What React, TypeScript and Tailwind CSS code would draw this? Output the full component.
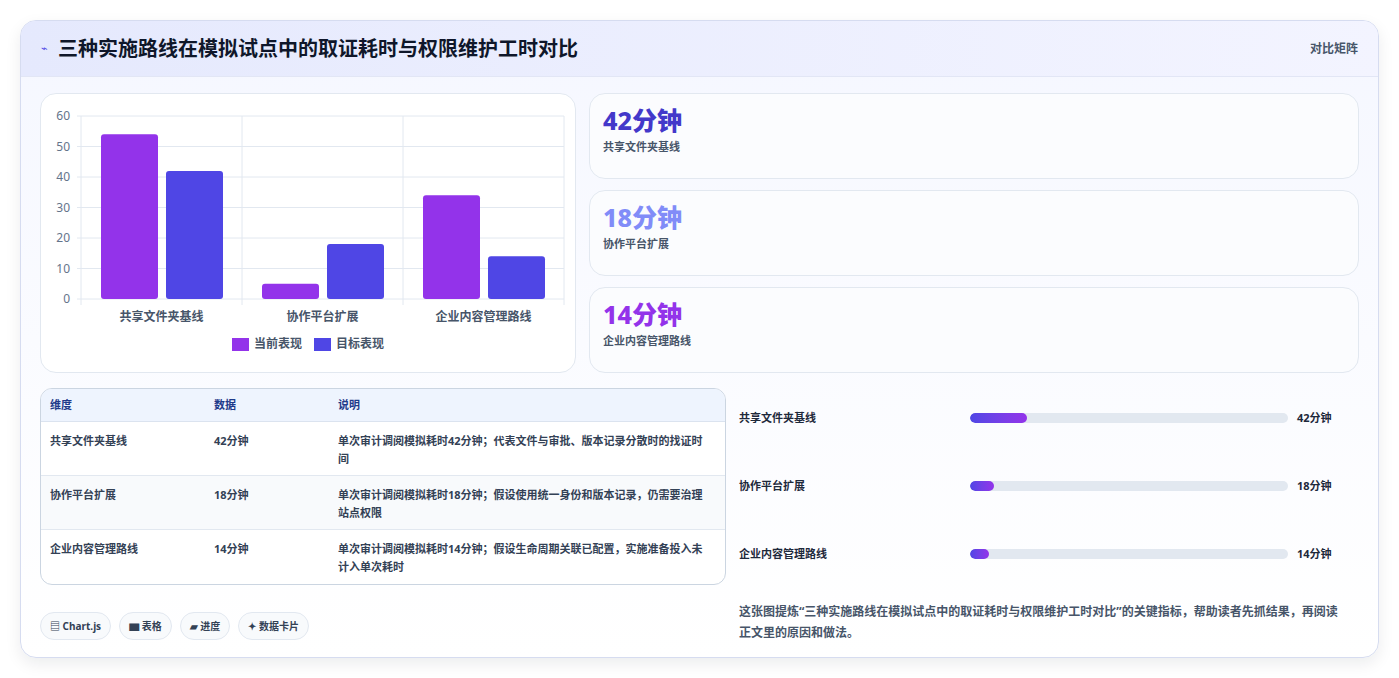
import * as React from "react"

const font = { fontFamily: '"Noto Sans", "Noto Sans CJK SC", sans-serif' }

const rows = [
  { name: "共享文件夹基线", val: "42分钟", desc: "单次审计调阅模拟耗时42分钟；代表文件与审批、版本记录分散时的找证时间", pct: 18 },
  { name: "协作平台扩展", val: "18分钟", desc: "单次审计调阅模拟耗时18分钟；假设使用统一身份和版本记录，仍需要治理站点权限", pct: 7.7 },
  { name: "企业内容管理路线", val: "14分钟", desc: "单次审计调阅模拟耗时14分钟；假设生命周期关联已配置，实施准备投入未计入单次耗时", pct: 6 },
]

function Chart() {
  const y0 = 298
  const k = 183 / 60
  const groups = [
    { label: "共享文件夹基线", a: 54, b: 42 },
    { label: "协作平台扩展", a: 5, b: 18 },
    { label: "企业内容管理路线", a: 34, b: 14 },
  ]
  return (
    <svg width="535" height="279" viewBox="40 93 535 279" className="block">
      {[0, 10, 20, 30, 40, 50, 60].map((t) => (
        <g key={t}>
          <line x1="76" x2="563" y1={y0 - t * k} y2={y0 - t * k} stroke="#e2e8f0" />
          <text x="69" y={y0 - t * k + 4} textAnchor="end" fontSize="12" fill="#64748b">{t}</text>
        </g>
      ))}
      {[80, 241, 402, 563].map((x) => (
        <line key={x} x1={x} x2={x} y1={115} y2={304} stroke="#e2e8f0" />
      ))}
      {groups.map((g, i) => {
        const gx = 80 + i * 161
        return (
          <g key={g.label}>
            <rect x={gx + 20} y={y0 - g.a * k} width="57" height={g.a * k} rx="3" fill="#9333ea" />
            <rect x={gx + 85} y={y0 - g.b * k} width="57" height={g.b * k} rx="3" fill="#4f46e5" />
            <text x={gx + 80.5} y="320" textAnchor="middle" fontSize="12" fontWeight="700" fill="#475569">{g.label}</text>
          </g>
        )
      })}
      <rect x="231" y="337" width="17" height="13" fill="#9333ea" />
      <text x="253" y="347" fontSize="12" fontWeight="700" fill="#475569">当前表现</text>
      <rect x="313" y="337" width="17" height="13" fill="#4f46e5" />
      <text x="335" y="347" fontSize="12" fontWeight="700" fill="#475569">目标表现</text>
    </svg>
  )
}

function Stat({ v, label, color }: { v: string; label: string; color: string }) {
  return (
    <div className="h-[86px] rounded-2xl border border-[#e2e8f0] bg-[#fbfcfe] px-[13px] pt-[10px]">
      <div className={`text-[25px] font-extrabold leading-[32px] ${color}`}>{v}</div>
      <div className="text-[11px] font-bold text-[#475569] mt-[3px]">{label}</div>
    </div>
  )
}

export default function App() {
  return (
    <div className="min-h-[678px] bg-white p-[20px]" style={font}>
      <div className="w-[1359px] h-[638px] rounded-2xl border border-[#d6dcf0] bg-gradient-to-b from-[#f5f7ff] to-white shadow-[0_6px_16px_rgba(15,23,42,0.08)] overflow-hidden">
        <div className="h-[56px] flex items-center justify-between px-[20px] bg-gradient-to-r from-[#e5e9fd] to-[#f3f4ff] border-b border-[#e2e6f5]">
          <div className="flex items-center gap-[10px]">
            <span className="text-[11px] text-[#4f46e5]">⌁</span>
            <h1 className="text-[20px] font-bold text-[#0f172a]">三种实施路线在模拟试点中的取证耗时与权限维护工时对比</h1>
          </div>
          <span className="text-[12px] font-bold text-[#475569]">对比矩阵</span>
        </div>
        <div className="px-[19px] pt-[16px]">
          <div className="flex gap-[13px]">
            <div className="w-[536px] h-[280px] rounded-2xl border border-[#e2e8f0] bg-white overflow-hidden">
              <Chart />
            </div>
            <div className="flex-1 flex flex-col gap-[11px]">
              <Stat v="42分钟" label="共享文件夹基线" color="text-[#4338ca]" />
              <Stat v="18分钟" label="协作平台扩展" color="text-[#818cf8]" />
              <Stat v="14分钟" label="企业内容管理路线" color="text-[#9333ea]" />
            </div>
          </div>
          <div className="flex gap-[13px] mt-[15px]">
            <div className="w-[686px]">
              <div className="rounded-xl border border-[#cbd5e1] overflow-hidden bg-white text-[11px]">
                <div className="grid grid-cols-[164px_124px_1fr] h-[33px] items-center bg-[#eef4fe] text-[#1e3a8a] font-bold px-[9px] border-b border-[#dbe3ef]">
                  <span>维度</span><span>数据</span><span>说明</span>
                </div>
                {rows.map((r, i) => (
                  <div key={r.name} className={`grid grid-cols-[164px_124px_1fr] h-[54px] px-[9px] pt-[10px] font-bold text-[#334155] leading-[18px] ${i < 2 ? "border-b border-[#e2e8f0]" : ""} ${i === 1 ? "bg-[#f8fafc]" : ""}`}>
                    <span>{r.name}</span><span>{r.val}</span><span className="pr-[6px]">{r.desc}</span>
                  </div>
                ))}
              </div>
              <div className="flex gap-[8px] mt-[27px]">
                {["▤ Chart.js", "▆ 表格", "▰ 进度", "✦ 数据卡片"].map((c) => (
                  <span key={c} className="h-[28px] px-[9px] rounded-full border border-[#e2e8f0] bg-[#f8fafc] text-[10px] font-bold text-[#334155] flex items-center">{c}</span>
                ))}
              </div>
            </div>
            <div className="flex-1 pl-[0px]">
              <div className="flex flex-col gap-[50px] pt-[21px]">
                {rows.map((r) => (
                  <div key={r.name} className="flex items-center h-[18px] pr-[24px]">
                    <span className="w-[231px] text-[11px] font-bold text-[#1e293b]">{r.name}</span>
                    <div className="w-[318px] h-[10px] rounded-full bg-[#e2e8f0] overflow-hidden">
                      <div className="h-full rounded-full bg-gradient-to-r from-[#4f46e5] to-[#9333ea]" style={{ width: `${r.pct}%` }} />
                    </div>
                    <span className="ml-[9px] text-[11px] font-bold text-[#1e293b]">{r.val}</span>
                  </div>
                ))}
              </div>
              <p className="mt-[38px] text-[12px] font-bold text-[#475569] leading-[21px] pr-[20px]">
                这张图提炼“三种实施路线在模拟试点中的取证耗时与权限维护工时对比”的关键指标，帮助读者先抓结果，再阅读正文里的原因和做法。
              </p>
            </div>
          </div>
        </div>
      </div>
    </div>
  )
}
